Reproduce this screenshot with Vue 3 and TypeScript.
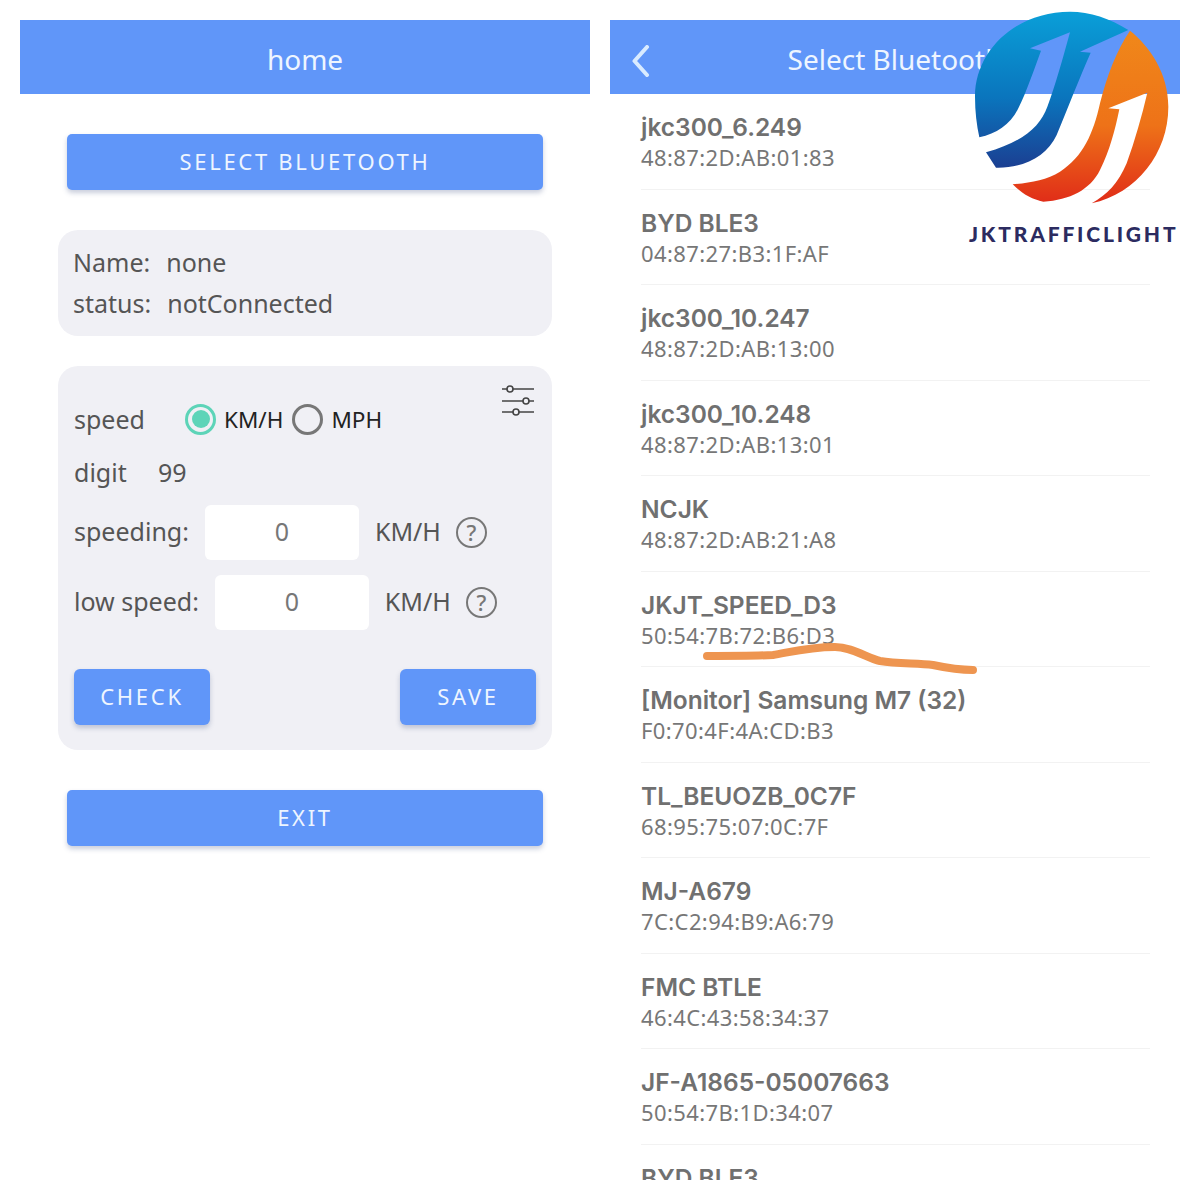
<script setup lang="ts">
interface Device { name: string; mac?: string }
const devices: Device[] = [
  { name: 'jkc300_6.249', mac: '48:87:2D:AB:01:83' },
  { name: 'BYD BLE3', mac: '04:87:27:B3:1F:AF' },
  { name: 'jkc300_10.247', mac: '48:87:2D:AB:13:00' },
  { name: 'jkc300_10.248', mac: '48:87:2D:AB:13:01' },
  { name: 'NCJK', mac: '48:87:2D:AB:21:A8' },
  { name: 'JKJT_SPEED_D3', mac: '50:54:7B:72:B6:D3' },
  { name: '[Monitor] Samsung M7 (32)', mac: 'F0:70:4F:4A:CD:B3' },
  { name: 'TL_BEUOZB_0C7F', mac: '68:95:75:07:0C:7F' },
  { name: 'MJ-A679', mac: '7C:C2:94:B9:A6:79' },
  { name: 'FMC BTLE', mac: '46:4C:43:58:34:37' },
  { name: 'JF-A1865-05007663', mac: '50:54:7B:1D:34:07' },
  { name: 'BYD BLE3' },
]
</script>

<template>
  <div class="page">
    <section class="col">
      <header class="bar"><span class="title">home</span></header>
      <div class="home">
        <button class="btn wide">SELECT BLUETOOTH</button>
        <div class="card info">
          <div class="info-row"><span class="info-label">Name:</span><span>none</span></div>
          <div class="info-row"><span class="info-label">status:</span><span>notConnected</span></div>
        </div>
        <div class="card settings">
          <svg class="sliders" width="36" height="34" viewBox="0 0 36 34" fill="none" stroke="#444" stroke-width="1.6">
            <path d="M2 5H34M2 17H34M2 28H34" />
            <circle cx="10" cy="5" r="3" fill="#f0f0f5" />
            <circle cx="26" cy="17" r="3" fill="#f0f0f5" />
            <circle cx="16" cy="28" r="3" fill="#f0f0f5" />
          </svg>
          <div class="row speed">
            <span class="speed-label">speed</span>
            <span class="radio on"><i></i></span>
            <span class="unit-dark">KM/H</span>
            <span class="radio"></span>
            <span class="unit-dark">MPH</span>
          </div>
          <div class="row digit"><span class="digit-label">digit</span><span>99</span></div>
          <div class="row field first">
            <span class="lift">speeding:</span>
            <span class="input lift">0</span>
            <span class="unit lift">KM/H</span>
            <span class="help">?</span>
          </div>
          <div class="row field">
            <span class="lift">low speed:</span>
            <span class="input lift">0</span>
            <span class="unit lift">KM/H</span>
            <span class="help">?</span>
          </div>
          <div class="actions">
            <button class="btn small">CHECK</button>
            <button class="btn small">SAVE</button>
          </div>
        </div>
        <button class="btn wide">EXIT</button>
      </div>
    </section>

    <section class="col">
      <header class="bar">
        <svg class="back" width="18" height="32" viewBox="0 0 18 32" fill="none" stroke="#d9ebff" stroke-width="4" stroke-linecap="round" stroke-linejoin="round">
          <path d="M15 2L2.5 16L15 30" />
        </svg>
        <span class="title">Select Bluetooth</span>
      </header>
      <ul class="list">
        <li v-for="(d, i) in devices" :key="i" class="device">
          <div class="dev-name">{{ d.name }}</div>
          <div v-if="d.mac" class="dev-mac">{{ d.mac }}</div>
        </li>
      </ul>
    </section>

    <svg class="scribble" width="290" height="50" viewBox="0 0 290 50" fill="none">
      <path d="M5 20C30 20 50 20 71 19C85 17 105 11 133 11C150 11 165 22 178 25C195 28 215 27 231 29C245 32 255 34 271 34" stroke="#ee9550" stroke-width="8" stroke-linecap="round" stroke-linejoin="round" />
    </svg>

    <div class="logo">
      <svg width="240" height="215" viewBox="0 0 720 645">
        <defs>
          <linearGradient id="blueGrad" x1="0" y1="0" x2="0" y2="1">
            <stop offset="0" stop-color="#0a9fd8" />
            <stop offset="0.55" stop-color="#0a75bd" />
            <stop offset="1" stop-color="#1b3f92" />
          </linearGradient>
          <linearGradient id="orangeGrad" x1="0" y1="0" x2="0" y2="1">
            <stop offset="0" stop-color="#f0881a" />
            <stop offset="0.55" stop-color="#ee7218" />
            <stop offset="1" stop-color="#e02c18" />
          </linearGradient>
        </defs>
        <path fill="url(#blueGrad)" d="M505 90C450 55 390 35 330 35C170 35 45 150 45 290C45 335 50 375 58 412C110 400 150 375 175 325C200 275 225 200 243 152L210 145L330 97C310 170 285 260 262 320C240 380 190 425 78 457L108 503C190 505 260 470 290 405C325 320 360 230 392 158L360 155Z" />
        <path fill="url(#orangeGrad)" d="M510 92C470 150 440 230 420 310C400 400 370 470 300 515C260 540 210 548 158 553C185 580 215 598 250 605C330 600 390 570 420 510C450 450 465 390 478 328L445 325L562 278C545 350 525 420 500 490C475 550 440 585 395 610C530 580 625 460 625 320C625 220 570 140 510 92Z" />
      </svg>
      <div class="logo-text">JKTRAFFICLIGHT</div>
    </div>
  </div>
</template>

<style>
html, body { background: #fff; }
</style>

<style scoped>
.page {
  position: relative;
  box-sizing: border-box;
  width: 1200px;
  height: 1180px;
  padding: 20px 20px 0;
  display: grid;
  grid-template-columns: 570px 570px;
  gap: 20px;
  overflow: hidden;
  background: #fff;
  font-family: "Noto Sans", sans-serif;
}
.col { min-width: 0; overflow: hidden; }
.bar {
  position: relative;
  box-sizing: border-box;
  height: 74px;
  padding-top: 4px;
  background: #6096f9;
  display: flex;
  align-items: center;
  justify-content: center;
}
.title { color: #eef5ff; font-size: 28px; }
.back { position: absolute; left: 22px; top: 25px; }
.home {
  padding: 40px 38px 0;
  display: flex;
  flex-direction: column;
  align-items: stretch;
}
.btn {
  border: 0;
  background: #6096f9;
  color: #eef5ff;
  font-family: inherit;
  font-size: 22px;
  letter-spacing: 2.7px;
  box-shadow: 0 3px 5px rgba(60, 80, 130, 0.28);
  padding: 0 0 2px;
}
.wide { height: 56px; margin: 0 9px; border-radius: 5px; }
.card { background: #f0f0f5; border-radius: 20px; color: #555; font-size: 25px; }
.info { margin-top: 40px; padding: 11px 15px; height: 106px; box-sizing: border-box; }
.info-row { display: flex; height: 41px; align-items: center; }
.info-label { margin-right: 16px; }
.settings { position: relative; margin: 30px 0 40px; padding: 0 16px 25px; }
.sliders { position: absolute; right: 16px; top: 18px; }
.row { display: flex; align-items: center; }
.speed { padding-top: 34px; height: 38px; }
.speed-label { width: 111px; }
.unit-dark { color: #222; font-size: 22.5px; margin: 0 9px 0 9px; }
.radio {
  box-sizing: border-box;
  width: 31px;
  height: 31px;
  border-radius: 50%;
  border: 3px solid #777;
  display: flex;
  align-items: center;
  justify-content: center;
}
.radio + .unit-dark { margin-left: 8px; }
.radio.on { border-color: #5dd4b8; }
.radio.on i { width: 18px; height: 18px; border-radius: 50%; background: #5dd4b8; }
.digit { height: 40px; margin-top: 15px; padding-bottom: 2px; box-sizing: border-box; }
.digit-label { width: 84px; }
.field { height: 55px; margin-top: 15px; }
.field.first { margin-top: 12px; }
.lift { padding-bottom: 4px; }
.input {
  box-sizing: border-box;
  width: 154px;
  height: 55px;
  margin: 0 16px;
  background: #fff;
  border-radius: 6px;
  display: flex;
  align-items: center;
  justify-content: center;
  color: #777;
}
.unit { margin-right: 15px; }
.help {
  box-sizing: border-box;
  width: 31px;
  height: 31px;
  border: 2px solid #777;
  border-radius: 50%;
  display: flex;
  align-items: center;
  justify-content: center;
  color: #777;
  font-size: 22px;
  font-weight: 500;
  margin-bottom: 1px;
}
.actions { display: flex; justify-content: space-between; margin-top: 39px; }
.small { width: 136px; height: 56px; border-radius: 6px; }
.list { list-style: none; margin: 0; padding: 0 30px 0 31px; }
.device {
  box-sizing: border-box;
  height: 95.5px;
  padding-top: 18px;
  border-bottom: 1px solid #f2f2f2;
  color: #707070;
}
.dev-name { font-family: Inter, sans-serif; font-size: 24.5px; font-weight: 600; line-height: 30px; }
.dev-mac { font-size: 22px; line-height: 30px; color: #777; letter-spacing: 0.4px; }
.scribble { position: absolute; left: 702px; top: 636px; }
.logo { position: absolute; left: 960px; top: 0; width: 240px; }
.logo svg { display: block; }
.logo-text {
  position: absolute;
  left: 9px;
  top: 221px;
  color: #2c2b60;
  font-family: Lato, sans-serif;
  font-weight: 900;
  font-size: 21px;
  letter-spacing: 2.8px;
  white-space: nowrap;
}
</style>
